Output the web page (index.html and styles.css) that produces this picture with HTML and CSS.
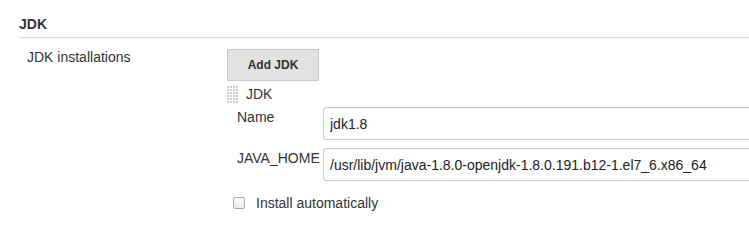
FILE: index.html
```html
<!DOCTYPE html>
<html>
<head>
<meta charset="utf-8">
<link rel="stylesheet" href="styles.css">
</head>
<body>
<div class="section">
  <div class="section-header">JDK</div>
  <div class="row">
    <div class="row-label">JDK installations</div>
    <div class="row-field">
      <button class="btn" type="button">Add JDK</button>
      <div class="repeated">
        <div class="repeated-head"><span class="handle"></span><span class="repeated-title">JDK</span></div>
        <div class="fields">
          <div class="field">
            <label class="field-label">Name</label>
            <input class="field-input" type="text" value="jdk1.8">
          </div>
          <div class="field">
            <label class="field-label">JAVA_HOME</label>
            <input class="field-input" type="text" value="/usr/lib/jvm/java-1.8.0-openjdk-1.8.0.191.b12-1.el7_6.x86_64">
          </div>
        </div>
        <label class="check"><input class="check-box" type="checkbox"><span>Install automatically</span></label>
      </div>
    </div>
  </div>
</div>
</body>
</html>
```
FILE: styles.css
```css
html, body {
  margin: 0;
  padding: 0;
  background: #fff;
  overflow: hidden;
}
body {
  width: 749px;
  height: 232px;
  font-family: "Liberation Sans", Arial, sans-serif;
  font-size: 14px;
  line-height: 16px;
  color: #333;
}
.section-header {
  margin-left: 19px;
  padding-top: 16px;
  padding-bottom: 5px;
  font-weight: bold;
  border-bottom: 1px solid #dcdcdc;
}
.row {
  display: flex;
  padding-left: 27px;
  padding-top: 11px;
}
.row-label {
  width: 200px;
  flex: none;
}
.row-field {
  flex: 1;
  margin-right: -20px;
  min-width: 0;
}
.btn {
  display: block;
  width: 92px;
  height: 32px;
  margin: 0;
  padding: 0;
  border: 1px solid #c9c9c9;
  background: #e2e2e2;
  font-family: "Liberation Sans", Arial, sans-serif;
  font-size: 12px;
  font-weight: bold;
  color: #333;
}
.repeated-head {
  display: flex;
  align-items: flex-start;
  margin-top: 5px;
}
.handle {
  width: 11px;
  height: 17px;
  margin-right: 8px;
  background-color: #cfcfcf;
  background-image:
    linear-gradient(90deg, transparent 2px, #fff 2px),
    linear-gradient(transparent 2px, #fff 2px);
  background-size: 3px 3px;
}
.fields {
  display: flex;
  flex-direction: column;
  gap: 8px;
  margin-top: 4px;
  padding-left: 10px;
}
.field {
  display: flex;
  align-items: flex-start;
}
.field-label {
  width: 86px;
  flex: none;
  padding-top: 2px;
  white-space: nowrap;
}
.field-input {
  flex: 1;
  min-width: 0;
  box-sizing: border-box;
  height: 33px;
  margin: 0;
  padding: 0 6px;
  border: 1px solid #ccc;
  border-radius: 3px;
  box-shadow: inset 0 1px 1px rgba(0,0,0,0.05);
  font-family: "Liberation Sans", Arial, sans-serif;
  font-size: 14px;
  color: #222;
  background: #fff;
  outline: none;
}
.check {
  display: flex;
  align-items: center;
  margin-top: 14px;
  padding-left: 6px;
}
.check-box {
  appearance: none;
  -webkit-appearance: none;
  width: 12px;
  height: 12px;
  margin: 0 11px 0 0;
  border: 1px solid #a9a9a9;
  border-radius: 2px;
  background: linear-gradient(#fdfdfd, #e8e8e8);
  box-sizing: border-box;
}
```
